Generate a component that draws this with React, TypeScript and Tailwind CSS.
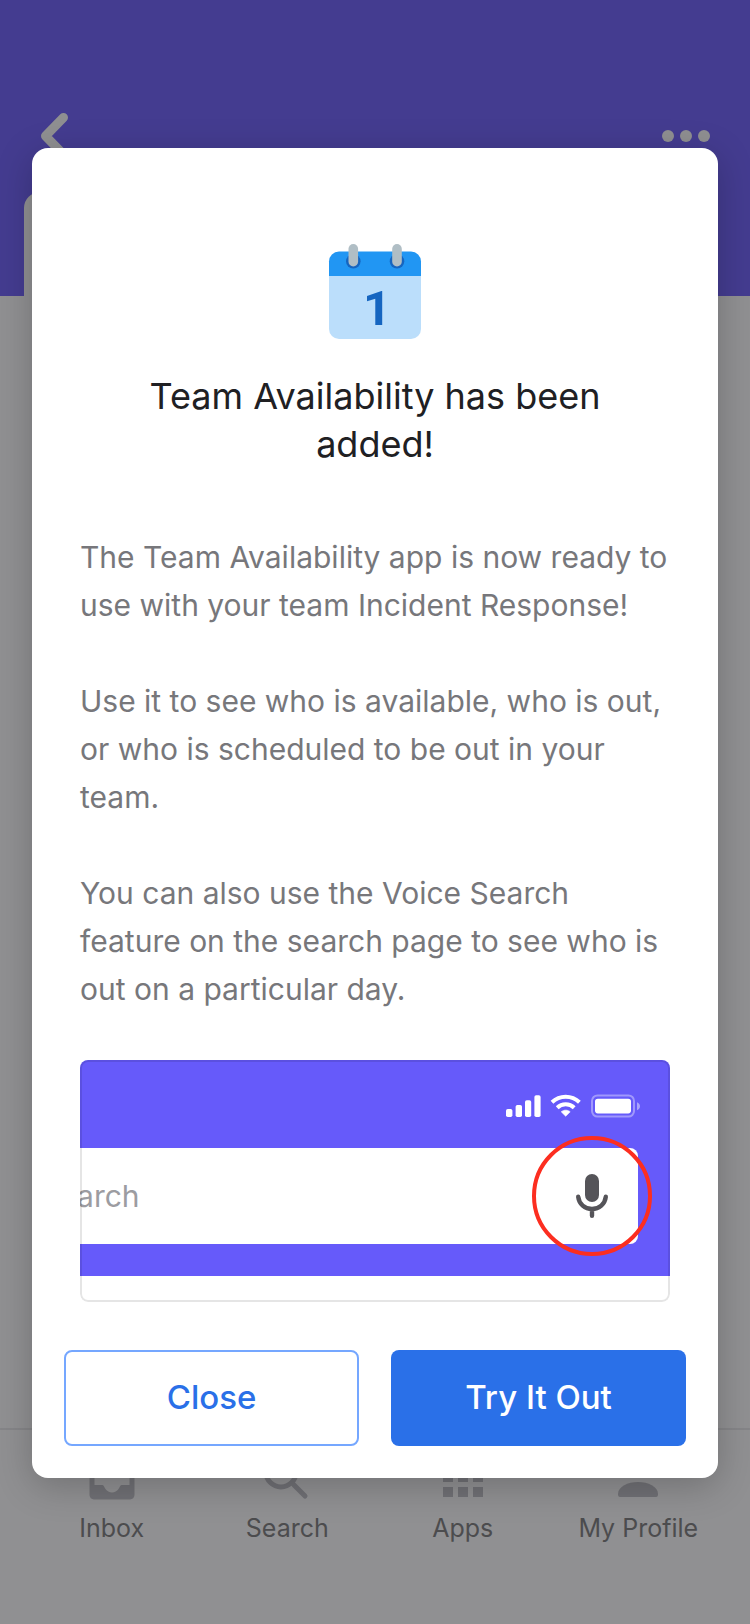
import type { ReactNode } from 'react';

function CalendarIcon() {
  return (
    <svg viewBox="0 0 120 120" className="size-30" aria-hidden="true">
      <path d="M14 40H106V94A10 10 0 0 1 96 104H24A10 10 0 0 1 14 94Z" fill="#bbdefb" />
      <path d="M14 41V26.500A10 10 0 0 1 24 16.500H96A10 10 0 0 1 106 26.500V41Z" fill="#2196f3" />
      <circle cx="38.3" cy="26.3" r="7.3" fill="#1565c0" />
      <circle cx="82" cy="26.3" r="7.3" fill="#1565c0" />
      <rect x="33.5" y="9" width="9.6" height="22.500" rx="4.8" fill="#b0bec5" />
      <rect x="77.2" y="9" width="9.6" height="22.500" rx="4.8" fill="#b0bec5" />
      <text x="62" y="90" textAnchor="middle" fontFamily="Roboto, sans-serif" fontWeight="700" fontSize="49" fill="#1565c0">
        1
      </text>
    </svg>
  );
}

function StatusIcons() {
  return (
    <svg viewBox="0 0 136 26" className="h-[26px] w-[136px]" aria-hidden="true">
      <g fill="#fff">
        <rect x="0" y="15" width="6.4" height="8" rx="1.8" />
        <rect x="9.6" y="11" width="6.4" height="12" rx="1.8" />
        <rect x="19" y="6.2" width="6.2" height="16.8" rx="1.8" />
        <rect x="28.4" y="1.2" width="6.2" height="21.8" rx="1.8" />
        <path d="M59.7 22.2 55.2 17.8C57.8 15.6 61.6 15.6 64.2 17.8Z" stroke="#fff" strokeWidth=".6" strokeLinejoin="round" />
      </g>
      <g fill="none" stroke="#fff" strokeWidth="4">
        <path d="M46 8.3A19.8 19.8 0 0 1 73.4 8.3" />
        <path d="M51.2 13.8A12.2 12.2 0 0 1 68.2 13.8" />
      </g>
      <rect x="86" y="1.4" width="42" height="21.2" rx="5.5" fill="none" stroke="#fff" strokeOpacity=".38" strokeWidth="2" />
      <rect x="89" y="4.8" width="36" height="14.6" rx="2.8" fill="#fff" />
      <path d="M131 8.2C135 9.8 135 14.6 131 16.2Z" fill="#fff" fillOpacity=".45" />
    </svg>
  );
}

function MicIcon() {
  return (
    <svg viewBox="0 0 48 48" className="size-12" aria-hidden="true">
      <rect x="17" y="2" width="14" height="28" rx="7" fill="#555459" />
      <path d="M10.2 24.8C11 32 16.8 37 24 37S37 32 37.8 24.8M24 37V43.8" fill="none" stroke="#555459" strokeWidth="4.4" strokeLinecap="round" />
    </svg>
  );
}

function VoiceSearchPreview() {
  return (
    <div className="relative overflow-hidden rounded-lg bg-white pb-[26px]">
      <div className="bg-[#665afa] pb-8">
        <div className="flex h-22 items-center justify-end pt-1.5 pr-7">
          <StatusIcons />
        </div>
        <div className="relative mr-8 -ml-10 flex h-24 items-center justify-between rounded-lg bg-white pr-[22px]">
          <input
            type="text"
            aria-label="Search"
            placeholder="Search"
            className="min-w-0 flex-1 bg-transparent text-[30px] text-[#555459] outline-none placeholder:text-[#9c9ca1]"
          />
          <button type="button" aria-label="Voice search">
            <MicIcon />
          </button>
          <span className="pointer-events-none absolute -top-3 -right-3.5 size-30 rounded-full border-4 border-[#fc2e20]" />
        </div>
      </div>
      <div className="pointer-events-none absolute inset-0 rounded-lg border-2 border-black/10" />
    </div>
  );
}

function TabLink({ label, children }: { label: string; children: ReactNode }) {
  return (
    <a href="#" className="flex flex-1 flex-col items-center gap-2 text-[25px] leading-9 text-[#4c4c4e]">
      <svg viewBox="0 0 48 48" className="size-12 text-[#707075]" fill="currentColor" aria-hidden="true">
        {children}
      </svg>
      {label}
    </a>
  );
}

export default function App() {
  return (
    <div className="relative flex min-h-screen flex-col bg-[#909092] font-['Inter','Liberation_Sans',sans-serif]">
      <header className="flex h-74 flex-col justify-between bg-[#443c90] pt-28">
        <div className="flex items-start justify-between px-10">
          <button type="button" aria-label="Back">
            <svg viewBox="0 0 32 48" className="h-12 w-8" fill="none" stroke="#8f8f91" strokeWidth="9" strokeLinecap="round" strokeLinejoin="round" aria-hidden="true">
              <path d="M23.500 5.500 5.500 24 23.500 42.500" />
            </svg>
          </button>
          <button type="button" aria-label="More" className="flex gap-1.5 pt-[18px]">
            <span className="size-3 rounded-full bg-[#8f8f91]" />
            <span className="size-3 rounded-full bg-[#8f8f91]" />
            <span className="size-3 rounded-full bg-[#8f8f91]" />
          </button>
        </div>
        <div className="mx-6 h-[104px] w-48 rounded-t-2xl bg-[#909092]" />
      </header>

      <main className="flex-1" />

      <nav className="flex h-49 border-t-2 border-[#858588] px-6 pt-6">
        <TabLink label="Inbox">
          <path
            fillRule="evenodd"
            d="M6 1H42A5 5 0 0 1 46.500 6V41A5 5 0 0 1 42 45.500H6A5 5 0 0 1 1.500 41V6A5 5 0 0 1 6 1ZM6.500 6V31H14C16 31 16 33 17.500 35C20.500 39.500 27.500 39.500 30.500 35C32 33 32 31 34 31H41.500V6Z"
          />
        </TabLink>
        <TabLink label="Search">
          <path
            d="M18 3A15 15 0 1 1 18 33A15 15 0 0 1 18 3M31 31 42 42"
            fill="none"
            stroke="currentColor"
            strokeWidth="5"
            strokeLinecap="round"
          />
        </TabLink>
        <TabLink label="Apps">
          <path d="M4 3h10v10H4zM19 3h10v10H19zM34 3h10v10H34zM4 18h10v10H4zM19 18h10v10H19zM34 18h10v10H34zM4 33h10v10H4zM19 33h10v10H19zM34 33h10v10H34z" />
        </TabLink>
        <TabLink label="My Profile">
          <circle cx="24" cy="14" r="10" />
          <path d="M4 40C4 32.500 14 28 24 28S44 32.500 44 40C44 42 43.500 43 42 43H6C4.500 43 4 42 4 40Z" />
        </TabLink>
      </nav>

      <div className="absolute inset-x-0 top-0 px-8 pt-37">
        <section
          role="dialog"
          aria-modal="true"
          aria-labelledby="dialog-title"
          className="rounded-2xl bg-white px-8 pt-[87px] pb-8 shadow-[0_8px_36px_rgba(0,0,0,0.22)]"
        >
          <div className="px-4">
            <div className="flex justify-center">
              <CalendarIcon />
            </div>
            <h1 id="dialog-title" className="mx-auto mt-[17px] max-w-120 text-center text-[36px] leading-12 text-[#202023]">
              Team Availability has been added!
            </h1>
            <div className="mt-[65px] mb-[47px] space-y-12 text-[30px] leading-12 text-[#77777b]">
              <p>The Team Availability app is now ready to use with your team Incident Response!</p>
              <p>Use it to see who is available, who is out, or who is scheduled to be out in your team.</p>
              <p>You can also use the Voice Search feature on the search page to see who is out on a particular day.</p>
            </div>
            <VoiceSearchPreview />
          </div>
          <div className="mt-12 grid grid-cols-2 gap-8 text-[33px] font-medium">
            <button type="button" className="h-24 rounded-lg border-2 border-[#75a7ff] text-[#2a70e8]">
              Close
            </button>
            <button type="button" className="h-24 rounded-lg bg-[#2a70e8] text-white">
              Try It Out
            </button>
          </div>
        </section>
      </div>
    </div>
  );
}
